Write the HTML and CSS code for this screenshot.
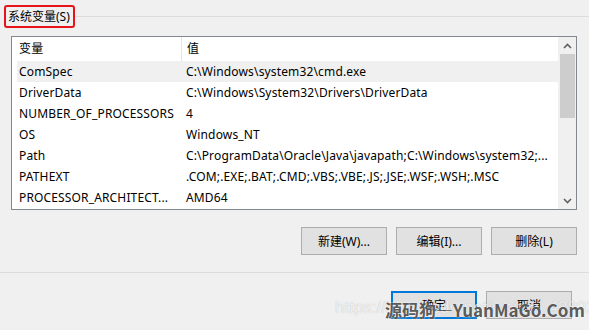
FILE: index.html
```html
<!DOCTYPE html>
<html lang="zh-CN">
<head>
  <meta charset="UTF-8">
  <meta name="viewport" content="width=device-width, initial-scale=1.0">
  <title>系统变量</title>
  <link rel="stylesheet" href="styles.css">
</head>
<body>
  <div class="group">
    <div class="group-title">
      <span class="legend">系统变量(<u>S</u>)</span>
      <span class="rule"></span>
    </div>
    <div class="list">
      <div class="table">
        <div class="row head">
          <div class="cell name">变量</div>
          <div class="cell value">值</div>
        </div>
        <div class="row selected">
          <div class="cell name">ComSpec</div>
          <div class="cell value">C:\Windows\system32\cmd.exe</div>
        </div>
        <div class="row">
          <div class="cell name">DriverData</div>
          <div class="cell value">C:\Windows\System32\Drivers\DriverData</div>
        </div>
        <div class="row">
          <div class="cell name">NUMBER_OF_PROCESSORS</div>
          <div class="cell value">4</div>
        </div>
        <div class="row">
          <div class="cell name">OS</div>
          <div class="cell value">Windows_NT</div>
        </div>
        <div class="row">
          <div class="cell name">Path</div>
          <div class="cell value">C:\ProgramData\Oracle\Java\javapath;C:\Windows\system32;...</div>
        </div>
        <div class="row">
          <div class="cell name">PATHEXT</div>
          <div class="cell value">.COM;.EXE;.BAT;.CMD;.VBS;.VBE;.JS;.JSE;.WSF;.WSH;.MSC</div>
        </div>
        <div class="row">
          <div class="cell name">PROCESSOR_ARCHITECT...</div>
          <div class="cell value">AMD64</div>
        </div>
      </div>
      <div class="scrollbar">
        <div class="arrow">
          <svg width="9" height="6" viewBox="0 0 9 6"><path d="M1 5 L4.5 1.5 L8 5" fill="none" stroke="#606060" stroke-width="1.6"/></svg>
        </div>
        <div class="thumb"></div>
        <div class="track"></div>
        <div class="arrow">
          <svg width="9" height="6" viewBox="0 0 9 6"><path d="M1 1 L4.5 4.5 L8 1" fill="none" stroke="#606060" stroke-width="1.6"/></svg>
        </div>
      </div>
    </div>
    <div class="actions">
      <button class="btn">新建(<u>W</u>)...</button>
      <button class="btn">编辑(<u>I</u>)...</button>
      <button class="btn">删除(<u>L</u>)</button>
    </div>
  </div>
  <div class="divider"></div>
  <div class="footer">
    <button class="btn primary">确定</button>
    <button class="btn">取消</button>
  </div>
  <div class="watermark">
    <span class="url">https://blog.csdn.net/weixin_43892214</span>
    <span class="brand">源码狗—YuanMaGo.Com</span>
  </div>
</body>
</html>
```

FILE: styles.css
```css
body {
  margin: 0;
  background-color: #f0f0f0;
  font-family: "Noto Sans", "Noto Sans CJK SC", sans-serif;
  font-size: 12px;
  color: #000;
  height: 330px;
  overflow: hidden;
  position: relative;
}
u {
  text-decoration: none;
}
.group {
  padding: 5px 12px 0 11px;
}
.group-title {
  display: flex;
  align-items: center;
  margin-left: -7px;
  margin-right: -12px;
}
.legend {
  display: block;
  height: 19px;
  line-height: 19px;
  padding: 0 3px 0 2px;
  border: 2px solid #e8141b;
  border-radius: 3px;
  white-space: nowrap;
}
.rule {
  flex: 1;
  height: 1px;
  background-color: #dcdcdc;
}
.list {
  display: flex;
  margin-top: 8px;
  height: 172px;
  border: 1px solid #828790;
  background-color: #fff;
}
.table {
  flex: 1;
  padding-left: 5px;
}
.row {
  display: flex;
  height: 21px;
  line-height: 21px;
}
.row.head {
  height: 24px;
  line-height: 23px;
}
.row.selected {
  background-color: #f0f0f0;
}
.cell {
  white-space: nowrap;
  overflow: hidden;
  letter-spacing: 0.15px;
}
.name {
  width: 162px;
  padding-left: 2px;
}
.value {
  flex: 1;
  padding-left: 5px;
}
.head .value {
  border-left: 1px solid #e5e5e5;
}
.scrollbar {
  width: 18px;
  display: flex;
  flex-direction: column;
  background-color: #f0f0f0;
}
.arrow {
  height: 17px;
  display: flex;
  align-items: center;
  justify-content: center;
  padding-left: 1px;
}
.thumb {
  height: 64px;
  margin: 0 1px 0 2px;
  background-color: #cdcdcd;
}
.track {
  flex: 1;
}
.actions {
  display: flex;
  justify-content: flex-end;
  gap: 9px;
  margin-top: 17px;
}
.btn {
  width: 86px;
  height: 28px;
  padding: 0;
  border: 1px solid #adadad;
  background-color: #e1e1e1;
  font-family: inherit;
  font-size: 12px;
  color: #000;
}
.divider {
  height: 1px;
  margin-top: 17px;
  background-color: #dcdcdc;
}
.footer {
  display: flex;
  justify-content: flex-end;
  gap: 9px;
  margin-top: 18px;
  padding-right: 17px;
}
.btn.primary {
  border: 2px solid #0078d7;
}
.watermark {
  position: absolute;
  left: 335px;
  top: 296px;
  width: 254px;
  height: 26px;
  overflow: hidden;
}
.url {
  position: absolute;
  left: 0;
  top: 2px;
  font-family: "Liberation Sans", sans-serif;
  font-size: 17px;
  color: rgba(255, 255, 255, 0.75);
  text-shadow: 0 0 1px rgba(0, 0, 0, 0.25);
  white-space: nowrap;
}
.brand {
  position: absolute;
  left: 50px;
  top: 1px;
  font-family: "Noto Sans CJK SC", sans-serif;
  font-size: 17px;
  font-weight: bold;
  color: rgba(70, 70, 70, 0.9);
  text-shadow: 0 0 2px #fff;
  white-space: nowrap;
}
```
